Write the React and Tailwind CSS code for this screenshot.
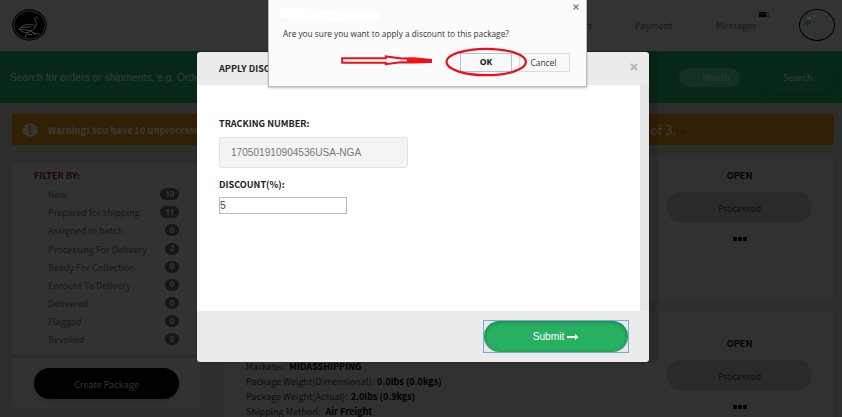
import React from "react";

const FILTERS = [
  ["New", "10"],
  ["Prepared for shipping", "11"],
  ["Assigned to batch", "0"],
  ["Processing For Delivery", "2"],
  ["Ready For Collection", "0"],
  ["Enroute To Delivery", "0"],
  ["Delivered", "0"],
  ["Flagged", "0"],
  ["Revoked", "0"],
];

function Logo() {
  return (
    <svg viewBox="0 0 35 32" className="h-8 w-[35px]" fill="none">
      <ellipse cx="17.500" cy="16" rx="17.200" ry="15.700" fill="#000" />
      <ellipse cx="17.500" cy="16" rx="15.700" ry="14.200" stroke="#383838" strokeWidth="0.8" />
      <path
        d="M26.500 10l-1.800-1.600c-1.400-.6-2.300.7-1.800 2 1.600 2.500 2 5.500.3 8.200-1.500 2.200-3.700 2.900-5.700 2.900-3.500 0-7-1.500-11-1 2.500-3.200 8-6.300 14-4.800 2.300.5 3.500 2 2.200 3.800M9 18.500l10-.8M8.500 21.500c3.500 2.500 7 2.800 10.500.8 2.500 1.800 4.500 2.800 8.500 2.700M17 22.500c-1.800 1.500-3.300 3.300-3.700 6M20 23l3.700 3.200M20 25.500h-4"
        stroke="#444"
        strokeWidth="1"
        strokeLinejoin="round"
      />
    </svg>
  );
}

function Header() {
  return (
    <header className="flex h-[51px] bg-[#333]">
      <div className="ml-[12px] pt-[9px]">
        <Logo />
      </div>
      <nav className="flex flex-1 justify-end pt-[16px] text-[9.100px] leading-[18px] text-[#171717]">
        <span className="w-[88px]">Customers</span>
        <span className="w-[81px]">Payment</span>
        <span className="w-[43px]">Messages</span>
        <span className="-mt-[5px] flex w-[40px] items-start">
          <svg viewBox="0 0 7 5" className="mt-[1px] h-[5px] w-[7px]">
            <path d="M0 0h7v5H0z" fill="#000" />
            <path d="M0 .5l3.500 2.300L7 .5" stroke="#333" strokeWidth=".6" fill="none" />
          </svg>
          <span className="text-[6px] font-bold leading-[7px] text-[#111]">1</span>
        </span>
      </nav>
      <div className="mr-[7px] mt-[9px] h-8 w-[36px] rounded-[50%] border border-black pl-[4px] pt-[4px]">
        <svg viewBox="0 0 12 12" className="h-3 w-3">
          <path d="M0 0h9l3 3v5l-4 3H0z" fill="#303236" />
          <path d="M.5 10L4 6l3 2.500L5.500 11H.5z" fill="#163018" />
          <path d="M3 3h4v2H3zM9 0v3h3" fill="#41454d" />
          <path d="M.5 11V.5H9" stroke="#242424" strokeWidth=".6" fill="none" />
        </svg>
      </div>
    </header>
  );
}

function SearchBar() {
  return (
    <div className="flex h-[52px] items-start bg-[#082817] pl-[10px] text-[#333]">
      <div className="mt-[15px] h-[21px] w-[500px] border-b border-[#0a2b1a] font-['Liberation_Sans',sans-serif] text-[10.300px] leading-[23px] text-[#343f39]">
        Search for orders or shipments, e.g. Order number
      </div>
      <div className="ml-[169px] mt-[17px] h-[19px] w-[61px] rounded-full bg-[#133022] pl-[23px] text-[9.200px] leading-[18px] text-[#303e36]">
        Month
      </div>
      <div className="ml-[22px] mt-[11px] h-[31px] w-[72px] rounded-full pl-[21px] text-[9.200px] leading-[31px] text-[#343f39] shadow-[0_3px_8px_rgba(0,0,0,0.1)]">
        Search
      </div>
    </div>
  );
}

function Warning() {
  return (
    <div className="ml-[12px] mt-[11px] flex h-[31px] w-[822px] items-center rounded-[2px] bg-[#312004] pl-[10px] text-[#3a3733]">
      <svg viewBox="0 0 16 14" className="h-[14px] w-[16px]">
        <ellipse cx="8" cy="7" rx="7.700" ry="6.800" fill="#373533" />
        <path d="M6.600 2.200h2.800L9 8.200H7zM6.900 9.300h2.200v2.100H6.900z" fill="#312004" />
      </svg>
      <span className="ml-[10px] w-[602px] whitespace-nowrap pt-[2px] text-[9px] font-black leading-[16px]">
        Warning! You have 10 unprocessed packages
      </span>
      <span className="w-[30px] text-[12.800px] font-medium leading-[20px]">of 3.</span>
      <span className="pt-px font-['Noto_Sans',sans-serif] text-[11px] leading-[20px] text-[#171717]">»</span>
    </div>
  );
}

function Filters() {
  return (
    <aside className="w-[188px] pt-[8px]">
      <div className="h-[192px] rounded-[2px] bg-[#323232] pl-[22px] pt-[4px]">
        <h2 className="h-[18px] text-[9.100px] font-bold leading-[16px] text-[#1d0508]">FILTER BY:</h2>
        <ul>
          {FILTERS.map(([name, count]) => (
            <li key={name} className="flex h-[18.170px] w-[145px] items-center justify-between pl-[14px]">
              <span className="text-[9.100px] leading-[18px] text-[#171717]">{name}</span>
              <span className="flex h-[12px] items-center rounded-full bg-[#171717] px-[4.700px] pb-px font-['Noto_Sans',sans-serif] text-[8px] font-bold leading-none text-[#363636]">
                {count}
              </span>
            </li>
          ))}
        </ul>
      </div>
      <div className="mt-[3px] h-[50px] rounded-[2px] bg-[#323232] pl-[22px] pt-[10px]">
        <div className="h-[31px] w-[145px] rounded-full bg-black text-center text-[9.100px] leading-[32px] text-[#353535] shadow-[0_3px_7px_rgba(0,0,0,0.12)]">
          Create Package
        </div>
      </div>
    </aside>
  );
}

function Status() {
  return (
    <div className="flex w-[145px] flex-col items-center text-black">
      <span className="text-[9.200px] font-bold leading-[16px]">OPEN</span>
      <div className="mt-[9px] h-[31px] w-full rounded-full bg-[#2a2a2a] text-center text-[9.100px] leading-[32px] text-[#0d0d0d]">
        Processed
      </div>
      <div className="mt-[14px] flex gap-[1px]">
        <i className="h-1 w-1 rounded-[1px] bg-black" />
        <i className="h-1 w-1 rounded-[1px] bg-black" />
        <i className="h-1 w-1 rounded-[1px] bg-black" />
      </div>
    </div>
  );
}

const DETAILS = [
  ["Marketer:", "MIDASSHIPPING"],
  ["Package Weight(Dimensional):", "0.0lbs (0.0kgs)"],
  ["Package Weight(Actual):", "2.0lbs (0.9kgs)"],
  ["Shipping Method: ", "Air Freight"],
];

function Packages() {
  return (
    <section className="ml-[24px] w-[609px]">
      <div className="flex h-[144px] justify-end bg-[#313131] pr-[21px] pt-[12px]">
        <Status />
      </div>
      <div className="mt-[12px] flex h-[106px] justify-between bg-[#313131] pr-[21px]">
        <div className="pl-[22px] pt-[48px] text-[9.050px] leading-[15px] text-[#0d0d0d]">
          {DETAILS.map(([label, value]) => (
            <p key={label} className="whitespace-pre">
              {label} <b className="ml-px text-black">{value}</b>
            </p>
          ))}
        </div>
        <div className="pt-[24px]">
          <Status />
        </div>
      </div>
    </section>
  );
}

function Modal() {
  return (
    <div className="absolute left-[197px] top-[52px] flex h-[310px] w-[452px] flex-col overflow-hidden rounded-[3px] bg-[#ebebeb] text-[#222] shadow-[9px_0_0_rgba(0,0,0,0.12),0_0_1px_#000]">
      <div className="flex h-[33px] justify-between pl-[22px] pr-[11px]">
        <h1 className="pt-[8px] text-[9.100px] font-bold leading-[16px]">APPLY DISC</h1>
        <svg viewBox="0 0 8 8" className="mt-[11px] h-[8px] w-[8px]">
          <path d="M1 1l6 6M7 1L1 7" stroke="#b5b5b5" strokeWidth="1.800" />
        </svg>
      </div>
      <div className="w-full bg-[#e5e5e5]">
        <div className="h-[226px] w-[443px] bg-white pl-[22px] pt-[30px] text-[9.100px] font-bold">
          <div className="h-[22px] leading-[16px]">TRACKING NUMBER:</div>
          <div className="h-[31px] w-[189px] rounded-[2px] border border-[#e2e2e2] bg-[#f4f4f4] pl-[11px] font-['Liberation_Sans',sans-serif] text-[10.100px] font-normal leading-[30px] text-[#777]">
            170501910904536USA-NGA
          </div>
          <div className="mt-[8px] h-[21px] leading-[16px]">DISCOUNT(%):</div>
          <div className="h-[17px] w-[128px] border border-[#bbb] font-['Liberation_Sans',sans-serif] text-[10.300px] font-normal leading-[15px] text-[#444]">
            5
          </div>
        </div>
      </div>
      <div className="flex justify-end pr-[20px] pt-[9px]">
        <div className="h-[33px] w-[146px] border border-[#7ba7e8] bg-[#e9e9ed]">
          <button className="flex h-[31px] w-[144px] items-center justify-center rounded-full bg-[#28b062] font-['Liberation_Sans',sans-serif] text-[10.200px] text-white shadow-[inset_0_1px_4px_rgba(0,60,20,0.4)]">
            Submit
            <svg viewBox="0 0 12 8" className="ml-[3px] h-2 w-3">
              <path d="M0 3.100h8V1l3.500 3L8 7V4.900H0z" fill="#fff" />
            </svg>
          </button>
        </div>
      </div>
    </div>
  );
}

function Confirm() {
  return (
    <div className="absolute left-[268px] top-0 h-[87px] w-[319px] border border-t-0 border-[#bbb] bg-[#fbfbfb] pl-[14px] pr-[7px] font-['Open_Sans',sans-serif] text-[#333] shadow-[0_1px_2px_rgba(0,0,0,0.25)]">
      <div className="flex h-[27px] justify-between pt-[4px]">
        <svg viewBox="0 0 106 15" className="-ml-[5px] mt-[3px] h-[15px] w-[106px]">
          <path d="M2 2L18 1l42 3 39 1c5 1 5 7 0 8l-44 2-37-3-13-1C0 11 0 6 2 2z" fill="#fff" />
        </svg>
        <svg viewBox="0 0 6 6" className="h-[6px] w-[6px]">
          <path d="M.5.5l5 5M5.500.5l-5 5" stroke="#777" strokeWidth="1.100" />
        </svg>
      </div>
      <p className="whitespace-nowrap text-[8.300px] leading-[14px]">Are you sure you want to apply a discount to this package?</p>
      <div className="mt-[12px] flex justify-end gap-[7px] pr-[9px] text-[8.400px] leading-[17px]">
        <button className="h-[19px] w-[52px] border border-[#a9c2ea] bg-[#f9f9f9] text-[8.600px] font-bold text-[#111]">OK</button>
        <button className="h-[19px] w-[51px] border border-[#ddd] bg-[#f9f9f9] pr-[2px]">Cancel</button>
      </div>
      <svg viewBox="0 0 190 34" className="absolute left-[72px] top-[45px] h-[34px] w-[190px]" fill="none" stroke="#ed1018">
        <path d="M1.200 13.200h43.600V11.500l16 2 12-.2 17 1.700v2l-17 .5-13-.3-15 2V17.700H1.200z" strokeWidth="2" />
        <path d="M66 15.500l25 .5" strokeWidth="3.200" />
        <ellipse cx="145.200" cy="17" rx="39.700" ry="13.200" strokeWidth="2.200" />
      </svg>
    </div>
  );
}

export default function App() {
  return (
    <div className="relative h-[417px] w-[842px] overflow-hidden bg-[#2d2d2d] font-['Noto_Sans_CJK_SC','Noto_Sans',sans-serif]">
      <Header />
      <SearchBar />
      <Warning />
      <main className="mt-[10px] flex pl-[12px]">
        <Filters />
        <Packages />
      </main>
      <Modal />
      <Confirm />
    </div>
  );
}
